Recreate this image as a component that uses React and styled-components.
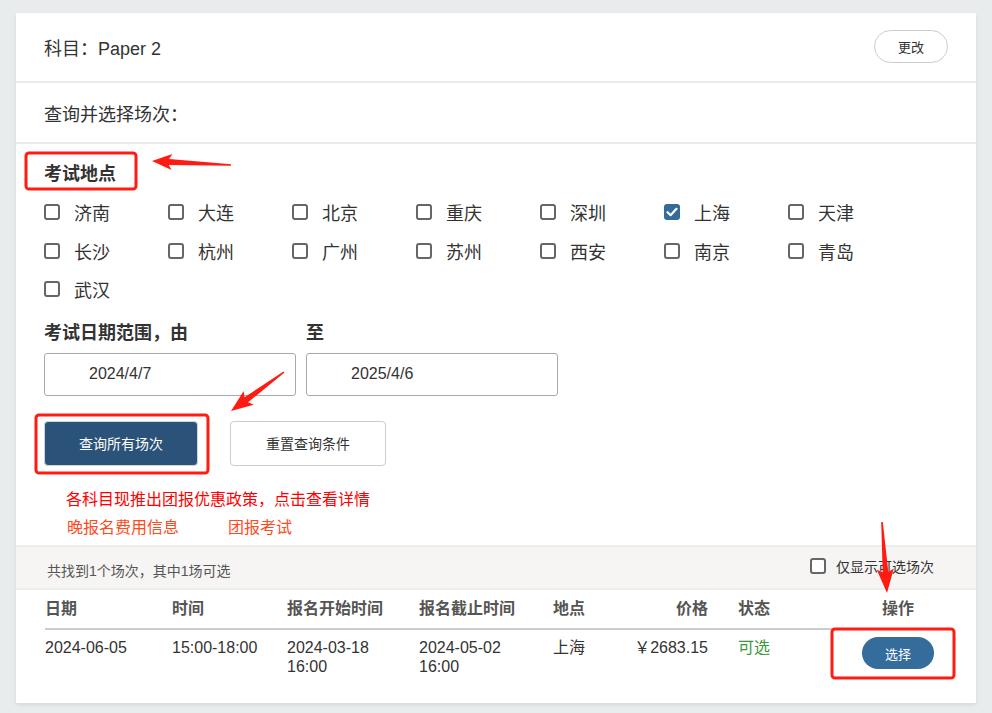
import React from 'react';
import styled, { createGlobalStyle } from 'styled-components';

const GlobalStyle = createGlobalStyle`
  body {
    margin: 0;
    background: #e8ecec;
    font-family: "Liberation Sans", "Noto Sans CJK SC", sans-serif;
    color: #333;
  }
`;

const Page = styled.div`
  position: relative;
  width: 992px;
  height: 713px;
  padding: 13px 16px 0;
  box-sizing: border-box;
`;

const Card = styled.div`
  background: #fff;
  width: 960px;
  height: 690px;
  box-shadow: 0 2px 4px rgba(0, 0, 0, 0.08);
`;

const HeaderRow = styled.div`
  height: 68px;
  padding: 0 28px;
  display: flex;
  align-items: center;
  justify-content: space-between;
  border-bottom: 2px solid #e8ecec;
  font-size: 18px;
`;

const PillButton = styled.button`
  width: 74px;
  height: 33px;
  border: 1px solid #ccc;
  border-radius: 17px;
  background: #fff;
  font-family: inherit;
  font-size: 13px;
  color: #333;
  margin-top: -2px;
`;

const SubHeader = styled.div`
  height: 59px;
  padding: 0 28px;
  display: flex;
  align-items: center;
  border-bottom: 2px solid #e8ecec;
  font-size: 18px;
`;

const Filters = styled.div`
  padding: 18px 28px 0;
  height: 401px;
  box-sizing: border-box;
`;

const Label = styled.div`
  font-size: 18px;
  font-weight: bold;
  line-height: 24px;
  color: #333;
`;

const CityGrid = styled.div`
  margin-top: 7px;
  display: grid;
  grid-template-columns: repeat(7, 124px);
  grid-auto-rows: 38.5px;
  align-items: center;
`;

const CheckItem = styled.label`
  display: flex;
  align-items: center;
  gap: 14px;
  font-size: 18px;
  color: #333;
`;

const Box = styled.span`
  width: 16px;
  height: 16px;
  box-sizing: border-box;
  border-radius: 3px;
  border: ${p => (p.$checked ? 'none' : '2px solid #666')};
  background: ${p => (p.$checked ? '#336b9b' : '#fff')};
  display: inline-flex;
  align-items: center;
  justify-content: center;
  flex-shrink: 0;
`;

const DateLabels = styled.div`
  margin-top: 12px;
  display: grid;
  grid-template-columns: 262px 252px;
`;

const DateInputs = styled.div`
  margin-top: 8px;
  display: flex;
  gap: 10px;
`;

const DateBox = styled.div`
  width: 252px;
  height: 43px;
  box-sizing: border-box;
  border: 1px solid #aaa;
  border-radius: 3px;
  padding-left: 44px;
  display: flex;
  align-items: center;
  font-size: 16px;
  color: #333;
`;

const Actions = styled.div`
  margin-top: 25px;
  display: flex;
  gap: 32px;
`;

const ActionButton = styled.button`
  width: ${p => p.$w}px;
  height: 45px;
  border-radius: 4px;
  font-family: inherit;
  font-size: 14px;
  border: ${p => (p.$primary ? '1px solid #ccd6e0' : '1px solid #ccc')};
  background: ${p => (p.$primary ? '#2b5278' : '#fff')};
  color: ${p => (p.$primary ? '#fff' : '#333')};
`;

const Notice = styled.div`
  margin-top: 23px;
  padding-left: 22px;
  font-size: 16px;
  line-height: 22px;
  color: ${p => p.$color};
`;

const LinkLine = styled.div`
  margin-top: 6px;
  padding-left: 23px;
  display: flex;
  gap: 49px;
  font-size: 16px;
  line-height: 22px;
  color: #ff4a1c;
`;

const ResultBar = styled.div`
  height: 41px;
  border-top: 2px solid #eceeee;
  border-bottom: 2px solid #eceeee;
  background: #f6f5f3;
  padding: 0 42px 0 31px;
  display: flex;
  align-items: center;
  justify-content: space-between;
  font-size: 14px;
  color: #555;
`;

const Count = styled.span`
  margin-top: 5px;
`;

const OnlyAvail = styled.label`
  display: flex;
  align-items: center;
  gap: 10px;
  font-size: 14px;
  color: #333;
  margin-top: -4px;
`;

const Table = styled.div`
  margin: 0 26px 0 29px;
`;

const Row = styled.div`
  display: grid;
  grid-template-columns: 127px 115px 132px 134px 80px 75px 138px 104px;
  border-bottom: ${p => (p.$head ? '2px solid #ccc' : 'none')};
  padding: ${p => (p.$head ? '7px 0 7px' : '7px 0 0')};
`;

const Cell = styled.div`
  font-size: 16px;
  line-height: ${p => (p.$head ? '24px' : '19px')};
  font-weight: ${p => (p.$head ? 'bold' : 'normal')};
  color: ${p => p.$color || (p.$head ? '#555' : '#333')};
  text-align: ${p => p.$align || 'left'};
  padding-left: ${p => p.$pl || 0}px;
  padding-top: ${p => (p.$head ? 0 : 1)}px;
`;

const ChooseButton = styled.button`
  display: block;
  margin: 0 auto;
  width: 72px;
  height: 32px;
  border: none;
  border-radius: 16px;
  background: #346c9c;
  color: #fff;
  font-family: inherit;
  font-size: 13px;
`;

const Overlay = styled.svg`
  position: absolute;
  left: 0;
  top: 0;
  pointer-events: none;
`;

const cities = [
  '济南', '大连', '北京', '重庆', '深圳', '上海', '天津',
  '长沙', '杭州', '广州', '苏州', '西安', '南京', '青岛',
  '武汉',
];

const CheckBox = ({ checked }) => (
  <Box $checked={checked}>
    {checked && (
      <svg width="12" height="10" viewBox="0 0 12 10">
        <path d="M1.5 5.2 L4.6 8.2 L10.5 1.8" fill="none" stroke="#fff" strokeWidth="2.2" strokeLinecap="round" strokeLinejoin="round" />
      </svg>
    )}
  </Box>
);

// tapered annotation arrow from tail to tip
const arrowPoints = (tx, ty, hx, hy, headLen, headHalf, neck, tail) => {
  const dx = hx - tx;
  const dy = hy - ty;
  const len = Math.hypot(dx, dy);
  const ux = dx / len;
  const uy = dy / len;
  const nx = -uy;
  const ny = ux;
  const bx = hx - ux * headLen;
  const by = hy - uy * headLen;
  const pts = [
    [tx + nx * tail, ty + ny * tail],
    [bx + nx * neck, by + ny * neck],
    [bx - ux * 3 + nx * headHalf, by - uy * 3 + ny * headHalf],
    [hx, hy],
    [bx - ux * 3 - nx * headHalf, by - uy * 3 - ny * headHalf],
    [bx - nx * neck, by - ny * neck],
    [tx - nx * tail, ty - ny * tail],
  ];
  return pts.map(p => p.map(v => v.toFixed(1)).join(',')).join(' ');
};

const RED = '#ff1a12';

const App = () => {
  return (
    <Page>
      <GlobalStyle />
      <Card>
        <HeaderRow>
          <span>科目：Paper 2</span>
          <PillButton>更改</PillButton>
        </HeaderRow>
        <SubHeader>查询并选择场次：</SubHeader>
        <Filters>
          <Label>考试地点</Label>
          <CityGrid>
            {cities.map(c => (
              <CheckItem key={c}>
                <CheckBox checked={c === '上海'} />
                {c}
              </CheckItem>
            ))}
          </CityGrid>
          <DateLabels>
            <Label>考试日期范围，由</Label>
            <Label>至</Label>
          </DateLabels>
          <DateInputs>
            <DateBox>2024/4/7</DateBox>
            <DateBox>2025/4/6</DateBox>
          </DateInputs>
          <Actions>
            <ActionButton $primary $w={154}>查询所有场次</ActionButton>
            <ActionButton $w={156}>重置查询条件</ActionButton>
          </Actions>
          <Notice $color="#f00">各科目现推出团报优惠政策，点击查看详情</Notice>
          <LinkLine>
            <span>晚报名费用信息</span>
            <span>团报考试</span>
          </LinkLine>
        </Filters>
        <ResultBar>
          <Count>共找到1个场次，其中1场可选</Count>
          <OnlyAvail>
            <CheckBox />
            仅显示可选场次
          </OnlyAvail>
        </ResultBar>
        <Table>
          <Row $head>
            <Cell $head>日期</Cell>
            <Cell $head>时间</Cell>
            <Cell $head>报名开始时间</Cell>
            <Cell $head>报名截止时间</Cell>
            <Cell $head>地点</Cell>
            <Cell $head $align="right">价格</Cell>
            <Cell $head $pl={30}>状态</Cell>
            <Cell $head $align="center">操作</Cell>
          </Row>
          <Row>
            <Cell>2024-06-05</Cell>
            <Cell>15:00-18:00</Cell>
            <Cell>2024-03-18<br />16:00</Cell>
            <Cell>2024-05-02<br />16:00</Cell>
            <Cell>上海</Cell>
            <Cell $align="right">￥2683.15</Cell>
            <Cell $pl={30} $color="#3a9a3a">可选</Cell>
            <div>
              <ChooseButton>选择</ChooseButton>
            </div>
          </Row>
        </Table>
      </Card>

      <Overlay width="992" height="713" viewBox="0 0 992 713">
        <g fill="none" stroke={RED} strokeWidth="3">
          <rect x="26" y="153" width="110" height="36" rx="3" />
          <rect x="36" y="415" width="172" height="58" rx="3" />
          <rect x="832" y="629" width="122" height="49" rx="3" />
        </g>
        <g fill={RED}>
          <polygon points={arrowPoints(231, 165, 152, 161, 17, 8, 3, 0.8)} />
          <polygon points={arrowPoints(284, 372, 231, 411, 19, 8.5, 3, 0.8)} />
          <polygon points={arrowPoints(882, 522, 887, 593, 21, 8.5, 2.8, 0.8)} />
        </g>
      </Overlay>
    </Page>
  );
};

export default App;
